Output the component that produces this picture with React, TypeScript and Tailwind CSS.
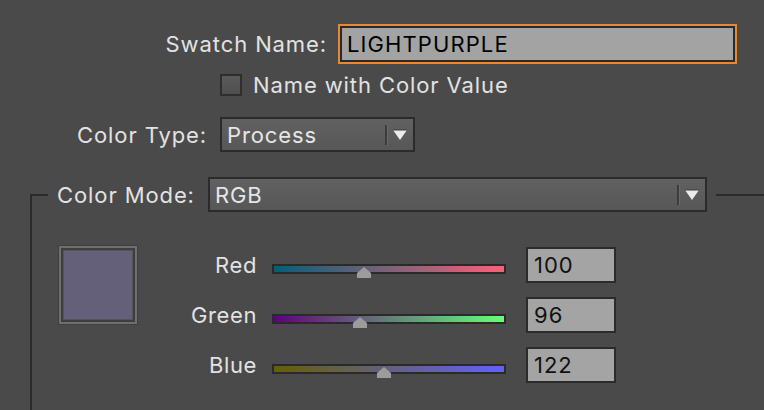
import React from 'react'

const sliders = [
  { label: 'Red', value: 100, grad: 'bg-[linear-gradient(to_right,#00607a,#ff607a)]' },
  { label: 'Green', value: 96, grad: 'bg-[linear-gradient(to_right,#64007a,#64ff7a)]' },
  { label: 'Blue', value: 122, grad: 'bg-[linear-gradient(to_right,#646000,#6460ff)]' },
]

const Arrow = () => (
  <div className="flex items-center h-full">
    <div className="w-[3px] h-[20px] bg-[#3c3c3c] border-r border-[#6a6a6a]" />
    <svg width="22" height="12" viewBox="0 0 22 12" className="ml-[1px]">
      <path d="M4 1 H18 L11 11 Z" fill="#ececec" />
      <path d="M4 1 H18" stroke="#3a3a3a" strokeWidth="1" />
    </svg>
  </div>
)

const Dropdown = ({ text, className }: { text: string; className: string }) => (
  <div className={`${className} shrink-0 h-[35px] border-2 border-[#2b2b2b] bg-[linear-gradient(to_bottom,#616161,#575757)] flex items-center justify-between pl-[5px] pr-[2px]`}>
    <span className="text-[#e6e6e6]">{text}</span>
    <Arrow />
  </div>
)

const App = () => {
  return (
    <div className="w-[764px] h-[410px] bg-[#4a4a4a] overflow-hidden text-[#e2e2e2] text-[22px] leading-none tracking-[0.9px] whitespace-nowrap font-['Inter',sans-serif]">
      <div className="flex items-center pt-[24px] h-[64px]">
        <div className="w-[327px] text-right">Swatch Name:</div>
        <div className="ml-[11px] w-[399px] h-[40px] border-2 border-[#e8892f]">
          <div className="w-full h-full border-2 border-[#2a2a2a] bg-[#a3a3a3] flex items-center pl-[5px] text-black tracking-[1.1px]">
            LIGHTPURPLE
          </div>
        </div>
      </div>

      <div className="flex items-center pl-[220px] mt-[10px] h-[22px]">
        <div className="w-[22px] h-[22px] border-2 border-[#2e2e2e] bg-[linear-gradient(to_bottom,#5a5a5a,#4f4f4f)]" />
        <span className="ml-[11px]">Name with Color Value</span>
      </div>

      <div className="flex items-center mt-[21px] h-[35px]">
        <div className="w-[207px] text-right">Color Type:</div>
        <Dropdown text="Process" className="ml-[13px] w-[195px]" />
      </div>

      <fieldset className="ml-[30px] mt-[25px] border-t-2 border-l-2 border-[#2b2b2b] h-[240px] min-w-0">
        <legend className="ml-[16px] px-[9px]">
          <div className="flex items-center w-[650px]">
            <span className="w-[136px] shrink-0">Color Mode:</span>
            <Dropdown text="RGB" className="ml-[15px] w-[499px]" />
          </div>
        </legend>

        <div className="flex pl-[27px] pt-[34px]">
          <div className="w-[78px] h-[78px] border-2 border-[#6f6f6f] p-[2px] bg-[#3e3e3e] outline outline-[#3f3f3f]">
            <div className="w-full h-full bg-[#64607a] border border-[#555]" />
          </div>

          <div className="flex flex-col gap-[14px] mt-[1px]">
            {sliders.map((s) => (
              <div key={s.label} className="flex items-center h-[36px]">
                <div className="w-[120px] text-right tracking-[0.6px]">{s.label}</div>
                <div className="ml-[15px] relative w-[234px] h-[10px] mt-[8px]">
                  <div className={`w-full h-full border-2 border-[#2a2a2a] ${s.grad}`} />
                  <svg
                    width="16"
                    height="11"
                    viewBox="0 0 16 11"
                    className="absolute top-[3px]"
                    style={{ left: (s.value / 255) * 234 - 8 }}
                  >
                    <path d="M8 0 L15 6 V11 H1 V6 Z" fill="#9c9c9c" />
                  </svg>
                </div>
                <div className="ml-[20px] w-[90px] h-[36px] border-2 border-[#2b2b2b] bg-[#a4a4a4] flex items-center pl-[6px] text-[#111] tracking-[1px]">
                  {s.value}
                </div>
              </div>
            ))}
          </div>
        </div>
      </fieldset>
    </div>
  )
}

export default App
